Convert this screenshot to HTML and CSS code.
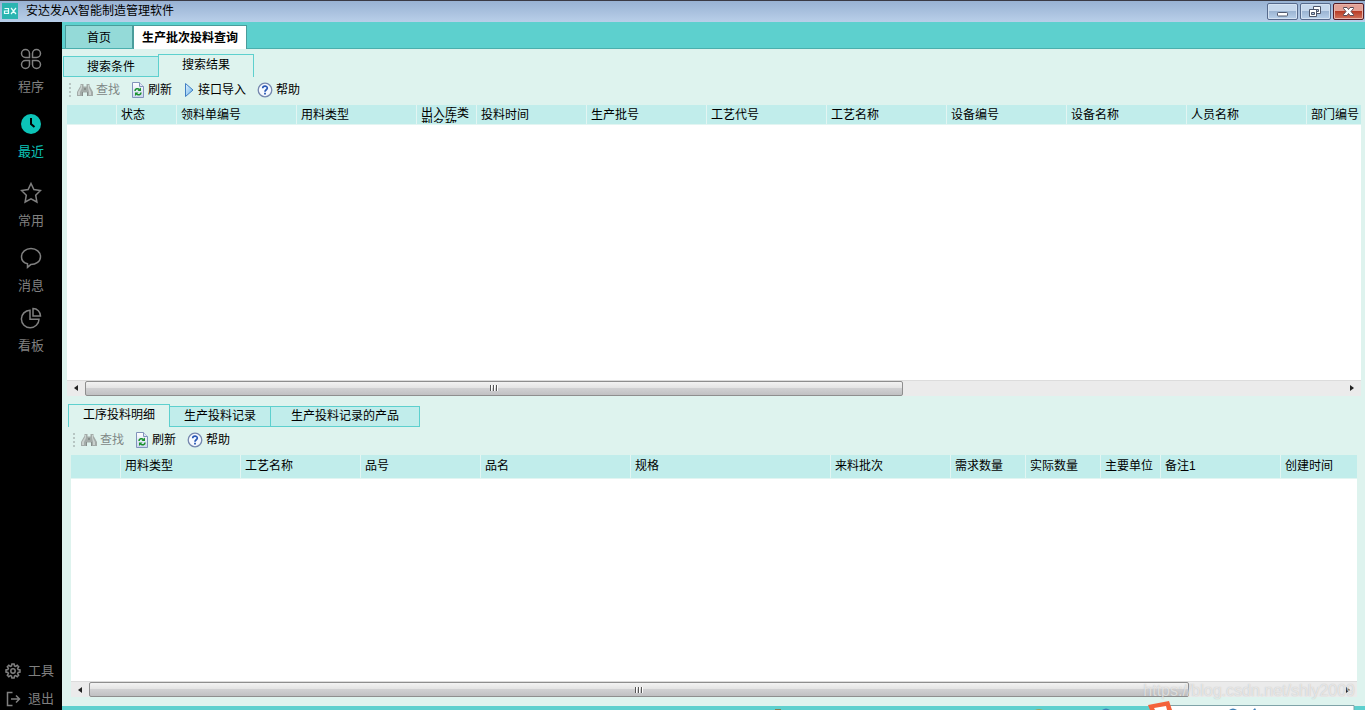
FILE: index.html
```html
<!DOCTYPE html>
<html lang="zh-CN">
<head>
<meta charset="utf-8">
<title>安达发AX智能制造管理软件</title>
<link rel="stylesheet" href="styles.css">
</head>
<body>
<svg class="defs" aria-hidden="true">
  <defs>
    <linearGradient id="play-fill" x1="0" y1="0" x2="1" y2="1"><stop offset="0" stop-color="#e3f4ff"/><stop offset="1" stop-color="#63aee8"/></linearGradient>
    <linearGradient id="page-fill" x1="0" y1="0" x2="0" y2="1"><stop offset="0" stop-color="#ffffff"/><stop offset="1" stop-color="#c9d6ee"/></linearGradient>
  </defs>
  <symbol id="i-find" viewBox="0 0 16 14">
    <path fill="#a3aba8" d="M3.500 1h3v2.500h3V1h3v2l1 1.500L16 9v4h-6V9.500H6V13H0V9l2.500-4.500 1-1.500z"/>
    <path fill="#c9d1ce" d="M4 2h1v3l-2 4v3H1V9l3-5zM11 2h1v3l2 4v3h-2V9l-1-4z"/>
    <path fill="#868e8b" d="M5 9h1v4H5zM10 9h1v4h-1zM7 5h2v2H7z"/>
  </symbol>
  <symbol id="i-refresh" viewBox="0 0 14 16">
    <path fill="url(#page-fill)" stroke="#8294bb" d="M1.500.500h7l4 4v11h-11z"/>
    <path fill="#dfe6f5" stroke="#8294bb" d="M8.500.500v4h4"/>
    <path fill="none" stroke="#18912b" stroke-width="1.500" d="M4 9C4 6.500 7 6 8.500 7.500M10 10.500c0 2.500-3 3-4.500 1.500"/>
    <path fill="#18912b" d="M6.500 9H10V5.500zM7.500 10.500H4V14z"/>
  </symbol>
  <symbol id="i-play" viewBox="0 0 10 16">
    <path fill="url(#play-fill)" stroke="#3f7fc4" stroke-linejoin="round" d="M1.500 1.500L9 8l-7.500 6.500z"/>
  </symbol>
  <symbol id="i-help" viewBox="0 0 16 16">
    <circle cx="8" cy="8" r="6.800" fill="#f5f9ff" stroke="#7587ae" stroke-width="1.300"/>
    <path fill="none" stroke="#2858b5" stroke-width="1.700" d="M5.700 6.300C5.700 3.500 10.300 3.500 10.300 6.100 10.300 7.700 8 7.800 8 9.700"/>
    <path fill="#2858b5" d="M7.100 10.700h1.800v1.700H7.100z"/>
  </symbol>
</svg>

<div class="app">
  <header class="titlebar">
    <svg class="logo" viewBox="0 0 16 16" aria-hidden="true">
      <path fill="#2bb5b1" d="M0 0h16v16H0z"/>
      <path fill="none" stroke="#e8fffd" stroke-width="1.200" d="M2.500 5.500h4v5H2.500V8h4M9 5l5 6M14 5l-5 6"/>
    </svg>
    <h1 class="title">安达发AX智能制造管理软件</h1>
    <div class="window-buttons">
      <button class="win" aria-label="最小化"><svg viewBox="0 0 29 15"><rect x="9.500" y="8.500" width="10" height="3.500" rx=".8" fill="#fff" stroke="#4d566b"/></svg></button>
      <button class="win" aria-label="还原"><svg viewBox="0 0 29 15"><path fill="#fff" stroke="#4d566b" d="M12.500 2.500h7v7h-7z"/><path fill="#a9c0dc" stroke="#4d566b" d="M14.500 5.500h3v2h-3z"/><path fill="#fff" stroke="#4d566b" d="M8.500 5.500h7v7h-7z"/><path fill="#a9c0dc" stroke="#4d566b" d="M10.500 8.500h3v2h-3z"/></svg></button>
      <button class="win win-close" aria-label="关闭"><svg viewBox="0 0 29 15"><path fill="#fff" stroke="#584a55" stroke-linejoin="round" d="M9.500 3.500h3.500l1.500 2 1.500-2h3.500v1L17 7.500l2.500 3v1H16l-1.500-2-1.500 2H9.500v-1l2.500-3-2.500-3z"/></svg></button>
    </div>
  </header>

  <div class="workspace">
    <nav class="sidebar">
      <div class="nav-main">
        <button class="nav-item"><svg viewBox="0 0 22 22"><path d="M9.500 9.500H5.500A4 4 0 1 1 9.500 5.500zM12.500 9.500h4A4 4 0 1 0 12.500 5.500zM9.500 12.500H5.500A4 4 0 1 0 9.500 16.500zM12.500 12.500h4A4 4 0 1 1 12.500 16.500z"/></svg>程序</button>
        <button class="nav-item nav-wide nav-active"><svg viewBox="0 0 22 22"><circle class="disc" cx="11" cy="11" r="10"/><path class="hands" d="M11 5v6l3.500 3"/></svg>最近</button>
        <button class="nav-item"><svg viewBox="0 0 22 22"><path d="M11 1.500l2.900 6.100 6.600.9-4.800 4.700 1.200 6.800-5.900-3.200L5.100 20l1.200-6.800L1.500 8.500l6.600-.9z"/></svg>常用</button>
        <button class="nav-item nav-tight"><svg viewBox="0 0 22 22"><path d="M7.500 16.800C3.800 15.800 1.500 13.200 1.500 10 1.500 5 5.700 1.500 11 1.500s9.500 3.500 9.500 8.300c0 4.700-4.500 7.800-9.800 7.800L7.500 20.300z"/></svg>消息</button>
        <button class="nav-item"><svg viewBox="0 0 22 22"><path d="M10 3.200v9h9A8.800 8.800 0 1 1 10 3.200zM13 1.500V9h7.500c0-4.200-3.300-7.500-7.500-7.500z"/></svg>看板</button>
      </div>
      <div class="nav-foot">
        <button class="nav-row"><svg viewBox="0 0 16 16"><path d="M6.900 1L9.100 1 9.500 2.900 10.600 3.400 12.200 2.300 13.700 3.800 12.600 5.400 13.100 6.500 15 6.900 15 9.100 13.100 9.500 12.600 10.600 13.700 12.200 12.200 13.700 10.600 12.600 9.500 13.100 9.100 15 6.900 15 6.500 13.100 5.400 12.600 3.800 13.700 2.300 12.200 3.400 10.600 2.900 9.500 1 9.100 1 6.900 2.900 6.500 3.400 5.400 2.300 3.800 3.800 2.300 5.400 3.400 6.500 2.900z"/><circle cx="8" cy="8" r="2.200"/></svg>工具</button>
        <button class="nav-row"><svg viewBox="0 0 16 16"><path d="M7.500 1.500h-5v13h5M6 8h8M11 4.500L14.500 8 11 11.500"/></svg>退出</button>
      </div>
    </nav>

    <main class="content">
      <div class="page-tabs" role="tablist">
        <button class="page-tab" role="tab" aria-selected="false">首页</button>
        <button class="page-tab page-tab-on" role="tab" aria-selected="true">生产批次投料查询</button>
      </div>

      <section class="pane pane-top">
        <div class="sub-tabs" role="tablist">
          <button class="sub-tab" role="tab" aria-selected="false">搜索条件</button>
          <button class="sub-tab sub-tab-on" role="tab" aria-selected="true">搜索结果</button>
        </div>
        <div class="toolbar" role="toolbar">
          <span class="grip"></span>
          <button class="tool" disabled><svg class="w16"><use href="#i-find"/></svg>查找</button>
          <button class="tool"><svg class="w14"><use href="#i-refresh"/></svg>刷新</button>
          <button class="tool"><svg class="w12"><use href="#i-play"/></svg>接口导入</button>
          <button class="tool"><svg class="w16"><use href="#i-help"/></svg>帮助</button>
        </div>
        <div class="grid">
          <table class="grid-table">
            <colgroup><col class="c50"><col class="c60"><col class="c120"><col class="c120"><col class="c60"><col class="c110"><col class="c120"><col class="c120"><col class="c120"><col class="c120"><col class="c120"><col class="c120"><col></colgroup>
            <thead><tr><th></th><th>状态</th><th>领料单编号</th><th>用料类型</th><th><div class="wrap">出入库类型名称</div></th><th>投料时间</th><th>生产批号</th><th>工艺代号</th><th>工艺名称</th><th>设备编号</th><th>设备名称</th><th>人员名称</th><th>部门编号</th></tr></thead>
          </table>
        </div>
        <div class="scroll">
          <button class="arrow" aria-label="向左滚动"><svg viewBox="0 0 4 6"><path d="M4 0v6L0 3z"/></svg></button>
          <div class="track"><div class="thumb" style="width:65%"></div></div>
          <button class="arrow" aria-label="向右滚动"><svg viewBox="0 0 4 6"><path d="M0 0v6l4-3z"/></svg></button>
        </div>
      </section>

      <section class="pane pane-bottom">
        <div class="sub-tabs" role="tablist">
          <button class="sub-tab sub-tab-on" role="tab" aria-selected="true">工序投料明细</button>
          <button class="sub-tab" role="tab" aria-selected="false">生产投料记录</button>
          <button class="sub-tab" role="tab" aria-selected="false">生产投料记录的产品</button>
        </div>
        <div class="toolbar" role="toolbar">
          <span class="grip"></span>
          <button class="tool" disabled><svg class="w16"><use href="#i-find"/></svg>查找</button>
          <button class="tool"><svg class="w14"><use href="#i-refresh"/></svg>刷新</button>
          <button class="tool"><svg class="w16"><use href="#i-help"/></svg>帮助</button>
        </div>
        <div class="grid">
          <table class="grid-table">
            <colgroup><col class="c50"><col class="c120"><col class="c120"><col class="c120"><col class="c150"><col class="c200"><col class="c120"><col class="c75"><col class="c75"><col class="c60"><col class="c120"><col></colgroup>
            <thead><tr><th></th><th>用料类型</th><th>工艺名称</th><th>品号</th><th>品名</th><th>规格</th><th>来料批次</th><th>需求数量</th><th>实际数量</th><th>主要单位</th><th>备注1</th><th>创建时间</th></tr></thead>
          </table>
        </div>
        <div class="scroll">
          <button class="arrow" aria-label="向左滚动"><svg viewBox="0 0 4 6"><path d="M4 0v6L0 3z"/></svg></button>
          <div class="track"><div class="thumb" style="width:88%"></div></div>
          <button class="arrow" aria-label="向右滚动"><svg viewBox="0 0 4 6"><path d="M0 0v6l4-3z"/></svg></button>
        </div>
      </section>

      <footer class="status"></footer>
    </main>
  </div>

  <svg class="ime" viewBox="0 0 600 9" aria-hidden="true">
    <path fill="#fff" stroke="#7fa3a8" d="M404.500 4.500h184.500v8H404z"/>
    <path fill="#f4623a" d="M383 4l21-4 3 9h-22z"/>
    <path fill="#fff" d="M389 7l12-2 1 4h-12z"/>
    <path fill="#3f7fb5" d="M464 9q4-3 8 0zM488 9l2-2 1 2zM337 9q4-3 8 0z"/>
    <path fill="#a6a458" d="M270 9q4-2 8 0z"/>
    <path fill="#8b7a4e" d="M10 8h6v1h-6z"/>
  </svg>
  <div class="watermark">https://blog.csdn.net/shly2009</div>
</div>
</body>
</html>
```
FILE: styles.css
```css
* { box-sizing: border-box; }

body {
  margin: 0;
  font: 12px/16px "Liberation Sans", "Noto Sans CJK SC", sans-serif;
  color: #000;
}

button {
  margin: 0;
  padding: 0;
  border: 0;
  background: none;
  color: inherit;
  font: inherit;
}

.defs { position: absolute; width: 0; height: 0; }

.app {
  position: relative;
  display: flex;
  flex-direction: column;
  height: 100vh;
  overflow: hidden;
}

/* Window frame */
.titlebar {
  display: flex;
  flex: none;
  align-items: center;
  height: 22px;
  padding: 0 1px 1px 2px;
  border-top: 1px solid #3a3a44;
  background: linear-gradient(#98b2d3, #b9cfe9);
}
.logo { width: 16px; height: 16px; }
.title { flex: 1; margin: 0 0 0 8px; font-size: 12px; font-weight: 400; }
.window-buttons { display: flex; gap: 2px; }
.win {
  width: 31px;
  height: 17px;
  border: 1px solid #566a8c;
  border-radius: 2px;
  background: linear-gradient(#c5d7ec 0 45%, #9cb5d3 50%, #b8d0ea);
  box-shadow: inset 0 0 0 1px #d4e2f2;
}
.win svg { display: block; width: 29px; height: 15px; }
.win-close {
  border-color: #541c26;
  background: linear-gradient(#e3a196 0 45%, #b93d27 50%, #d2745d);
  box-shadow: inset 0 0 0 1px #e8b3a8;
}

.workspace { display: flex; flex: 1; min-height: 0; }

/* Sidebar */
.sidebar {
  display: flex;
  flex: none;
  flex-direction: column;
  justify-content: space-between;
  width: 62px;
  padding-top: 26px;
  background: #000;
  color: #808080;
  font-size: 13px;
}
.nav-main { display: flex; flex-direction: column; align-items: center; }
.nav-item {
  display: flex;
  flex-direction: column;
  align-items: center;
  gap: 9px;
  margin-bottom: 18px;
}
.nav-wide { margin-bottom: 22px; }
.nav-tight { margin-bottom: 13px; }
.nav-item svg { width: 22px; height: 22px; }
.sidebar svg { fill: none; stroke: #808080; stroke-width: 1.5; }
.nav-active { color: #0cc4b8; }
.sidebar .disc { fill: #0cc4b8; stroke: none; }
.sidebar .hands { stroke: #000; stroke-width: 2; }
.nav-foot { display: flex; flex-direction: column; gap: 6px; }
.nav-row { display: flex; align-items: center; gap: 7px; height: 22px; padding-left: 5px; }
.nav-row svg { width: 16px; height: 16px; }

/* Content */
.content {
  display: flex;
  flex: 1;
  flex-direction: column;
  min-width: 0;
  background: #def3ee;
}
.page-tabs {
  display: flex;
  flex: none;
  align-items: flex-end;
  height: 27px;
  padding-left: 3px;
  border-bottom: 1px solid #4bafad;
  background: #5dd0ce;
}
.page-tab {
  height: 23px;
  padding: 1px 21px 0;
  border: 1px solid #4a9c9b;
  border-bottom: 0;
  background: #94dad8;
}
.page-tab-on {
  height: 24px;
  margin-bottom: -1px;
  padding: 0 8px;
  background: #fff;
  font-weight: 700;
}

.pane { display: flex; flex-direction: column; min-height: 0; }
.pane-top { flex: 7 1 0; padding: 5px 4px 0 1px; }
.pane-bottom { flex: 6 1 0; padding: 8px 8px 9px 6px; }

.sub-tabs { display: flex; flex: none; align-items: flex-end; height: 23px; }
.sub-tab {
  height: 21px;
  padding: 0 23px;
  border: 1px solid #5dd0ce;
  background: #c1edeb;
}
.sub-tab + .sub-tab { margin-left: -1px; }
.sub-tab-on {
  height: 23px;
  padding-bottom: 2px;
  border-bottom: 0;
  background: #def3ee;
}
.pane-bottom .sub-tab { padding-right: 14px; padding-left: 14px; }
.pane-bottom .sub-tab:last-child { padding-right: 20px; padding-left: 20px; }

.toolbar {
  display: flex;
  flex: none;
  align-items: center;
  gap: 11px;
  height: 28px;
  padding: 0 0 2px 6px;
}
.pane-bottom .toolbar { padding-left: 5px; }
.grip {
  width: 2px;
  height: 14px;
  margin-right: -5px;
  background: repeating-linear-gradient(#b7c6c3 0 2px, transparent 2px 4px);
}
.tool { display: flex; align-items: center; gap: 3px; height: 20px; }
.tool:disabled { color: #7f8886; }
.tool svg { height: 16px; }
.w16 { width: 16px; }
.w14 { width: 14px; }
.w12 { width: 12px; }

/* Data grids */
.grid { flex: 1; min-height: 0; overflow: hidden; background: #fff; }
.pane-top .grid, .pane-top .scroll { margin-left: 4px; }
.pane-bottom .grid, .pane-bottom .scroll { margin-left: 3px; }
.grid-table { width: 100%; table-layout: fixed; border-collapse: separate; border-spacing: 0; }
.grid-table th {
  height: 20px;
  padding: 0 0 0 4px;
  overflow: hidden;
  border-right: 1px solid #e2f5f2;
  border-bottom: 1px solid #e2f5f2;
  background: #c1edeb;
  font-weight: 400;
  text-align: left;
  white-space: nowrap;
}
.grid-table th:last-child { border-right: 0; }
.pane-bottom .grid-table th { height: 24px; }
.wrap { width: 50px; height: 16px; overflow: hidden; line-height: 12px; white-space: normal; }
.c50 { width: 50px; }
.c60 { width: 60px; }
.c75 { width: 75px; }
.c110 { width: 110px; }
.c120 { width: 120px; }
.c150 { width: 150px; }
.c200 { width: 200px; }

.scroll {
  display: flex;
  flex: none;
  height: 16px;
  border-top: 1px solid #dcdcdc;
  background: #ebebeb;
}
.arrow { display: flex; align-items: center; justify-content: center; width: 18px; }
.arrow svg { width: 4px; height: 6px; fill: #222; }
.track { flex: 1; }
.thumb {
  display: flex;
  align-items: center;
  justify-content: center;
  height: 15px;
  border: 1px solid #8e8e8e;
  border-radius: 2px;
  background: linear-gradient(#f3f3f3, #e4e4e4 45%, #d0d0d2 50%, #c0c0c2);
}
.thumb::before {
  width: 8px;
  height: 6px;
  background: repeating-linear-gradient(90deg, #555 0 1px, #fff 1px 2px, transparent 2px 3px);
  content: "";
}

.status { flex: none; height: 4px; background: #5dd0ce; }

/* Overlays above the lower edge */
.ime { position: absolute; right: 0; bottom: 0; width: 600px; height: 9px; }
.watermark {
  position: absolute;
  right: 10px;
  bottom: 10px;
  color: rgba(255, 255, 255, .6);
  font-size: 16px;
  line-height: 18px;
  text-shadow: 0 0 1px rgba(130, 130, 130, .5);
}
```
